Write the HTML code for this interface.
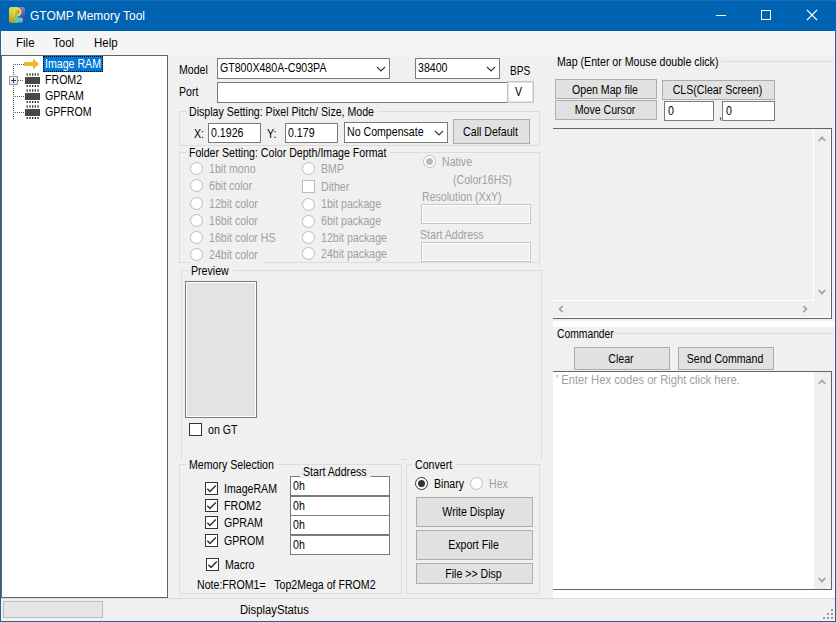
<!DOCTYPE html>
<html><head><meta charset="utf-8"><title>GTOMP Memory Tool</title>
<style>
html,body{margin:0;padding:0}
body{width:836px;height:622px;overflow:hidden;position:relative;background:#f0f0f0;font-family:"Liberation Sans",sans-serif;font-size:10.6px;color:#000}
.a{position:absolute;box-sizing:content-box}
.t{position:absolute;white-space:pre;line-height:1}
svg.a{display:block;overflow:visible}
</style></head><body>
<div class="a" style="left:0px;top:0px;width:836px;height:31px;background:#0063b1"></div>
<div class="a" style="left:0px;top:0px;width:836px;height:1px;background:#1a6fbd"></div>
<svg class="a" style="left:9px;top:7px" width="16" height="16" viewBox="0 0 16 16">
<defs>
<linearGradient id="il" x1="0" y1="0" x2="0" y2="1"><stop offset="0" stop-color="#b8e878"/><stop offset="0.5" stop-color="#e8c020"/><stop offset="1" stop-color="#a0a018"/></linearGradient>
<linearGradient id="ir" x1="0" y1="0" x2="0" y2="1"><stop offset="0" stop-color="#8080e8"/><stop offset="1" stop-color="#203890"/></linearGradient>
</defs>
<rect x="0" y="0" width="16" height="16" rx="2.5" fill="url(#ir)"/>
<path d="M2.5 0 H9 V16 H2.5 A2.5 2.5 0 0 1 0 13.5 V2.5 A2.5 2.5 0 0 1 2.5 0 Z" fill="url(#il)"/>
<rect x="5" y="1" width="7" height="8" rx="2" fill="#d8a010" opacity="0.6"/>
<circle cx="8.3" cy="5" r="3.2" fill="none" stroke="#f8e030" stroke-width="1.9"/>
<path d="M6.2 6 H8.4 V10 L13.8 11 V15.6 H6.8 L4.8 12 L6.2 11.5 Z" fill="#58c8b8"/>
</svg>
<span class="t" style="left:29.5px;top:9.00px;font-size:13px;color:#fff;transform:scaleX(0.9200);transform-origin:0 0;">GTOMP Memory Tool</span>
<div class="a" style="left:716px;top:15px;width:10px;height:1px;background:#fff"></div>
<div class="a" style="left:761px;top:10px;width:8px;height:8px;border:1px solid #fff;background:transparent;"></div>
<svg class="a" style="left:806px;top:9px" width="12" height="12"><path d="M1 1 L11 11 M11 1 L1 11" stroke="#fff" stroke-width="1.1"/></svg>
<div class="a" style="left:0px;top:31px;width:1px;height:591px;background:#2b5f8f"></div>
<div class="a" style="left:835px;top:31px;width:1px;height:591px;background:#2b5f8f"></div>
<div class="a" style="left:0px;top:621px;width:836px;height:1px;background:#2b5f8f"></div>
<div class="a" style="left:1px;top:31px;width:834px;height:24px;background:#f5f5f5"></div>
<span class="t" style="left:15.5px;top:37.42px;font-size:12.5px;color:#000;transform:scaleX(0.9200);transform-origin:0 0;">File</span>
<span class="t" style="left:53px;top:37.42px;font-size:12.5px;color:#000;transform:scaleX(0.9200);transform-origin:0 0;">Tool</span>
<span class="t" style="left:93.5px;top:37.42px;font-size:12.5px;color:#000;transform:scaleX(0.9200);transform-origin:0 0;">Help</span>
<div class="a" style="left:1px;top:55px;width:165px;height:541px;border:1px solid #646464;background:#fff;"></div>
<div class="a" style="left:13px;top:64px;width:1px;height:55px;background:repeating-linear-gradient(to bottom,#5a5a5a 0 1px,transparent 1px 2px)"></div>
<div class="a" style="left:13px;top:64px;width:11px;height:1px;background:repeating-linear-gradient(to right,#5a5a5a 0 1px,transparent 1px 2px)"></div>
<div class="a" style="left:18px;top:80px;width:6px;height:1px;background:repeating-linear-gradient(to right,#5a5a5a 0 1px,transparent 1px 2px)"></div>
<div class="a" style="left:13px;top:96px;width:11px;height:1px;background:repeating-linear-gradient(to right,#5a5a5a 0 1px,transparent 1px 2px)"></div>
<div class="a" style="left:13px;top:112px;width:11px;height:1px;background:repeating-linear-gradient(to right,#5a5a5a 0 1px,transparent 1px 2px)"></div>
<svg class="a" style="left:9px;top:76px" width="9" height="9"><defs><linearGradient id="pg" x1="0" y1="0" x2="1" y2="1"><stop offset="0" stop-color="#fff"/><stop offset="1" stop-color="#d8dce8"/></linearGradient></defs><rect x="0.5" y="0.5" width="8" height="8" fill="url(#pg)" stroke="#9b9b9b"/><path d="M2 4.5 H7 M4.5 2 V7" stroke="#1e3a6e" stroke-width="1"/></svg>
<svg class="a" style="left:24px;top:57px" width="16" height="14"><path d="M0 5 H9 V1.5 L15 7 L9 12.5 V9 H0 Z" fill="#f4b42c"/></svg>
<svg class="a" style="left:25px;top:73px" width="15" height="14"><rect x="0" y="4" width="15" height="7" fill="#474747"/><rect x="1.6" y="0.3" width="1.3" height="2.4" fill="#2e3a2e"/><rect x="1.6" y="12" width="1.3" height="2" fill="#2e2e2e"/><rect x="4.4" y="0.3" width="1.3" height="2.4" fill="#2e3a2e"/><rect x="4.4" y="12" width="1.3" height="2" fill="#2e2e2e"/><rect x="7.0" y="0.3" width="1.3" height="2.4" fill="#2e3a2e"/><rect x="7.0" y="12" width="1.3" height="2" fill="#2e2e2e"/><rect x="9.7" y="0.3" width="1.3" height="2.4" fill="#2e3a2e"/><rect x="9.7" y="12" width="1.3" height="2" fill="#2e2e2e"/><rect x="12.5" y="0.3" width="1.3" height="2.4" fill="#2e3a2e"/><rect x="12.5" y="12" width="1.3" height="2" fill="#2e2e2e"/></svg>
<svg class="a" style="left:25px;top:89px" width="15" height="14"><rect x="0" y="4" width="15" height="7" fill="#474747"/><rect x="1.6" y="0.3" width="1.3" height="2.4" fill="#2e3a2e"/><rect x="1.6" y="12" width="1.3" height="2" fill="#2e2e2e"/><rect x="4.4" y="0.3" width="1.3" height="2.4" fill="#2e3a2e"/><rect x="4.4" y="12" width="1.3" height="2" fill="#2e2e2e"/><rect x="7.0" y="0.3" width="1.3" height="2.4" fill="#2e3a2e"/><rect x="7.0" y="12" width="1.3" height="2" fill="#2e2e2e"/><rect x="9.7" y="0.3" width="1.3" height="2.4" fill="#2e3a2e"/><rect x="9.7" y="12" width="1.3" height="2" fill="#2e2e2e"/><rect x="12.5" y="0.3" width="1.3" height="2.4" fill="#2e3a2e"/><rect x="12.5" y="12" width="1.3" height="2" fill="#2e2e2e"/></svg>
<svg class="a" style="left:25px;top:105px" width="15" height="14"><rect x="0" y="4" width="15" height="7" fill="#474747"/><rect x="1.6" y="0.3" width="1.3" height="2.4" fill="#2e3a2e"/><rect x="1.6" y="12" width="1.3" height="2" fill="#2e2e2e"/><rect x="4.4" y="0.3" width="1.3" height="2.4" fill="#2e3a2e"/><rect x="4.4" y="12" width="1.3" height="2" fill="#2e2e2e"/><rect x="7.0" y="0.3" width="1.3" height="2.4" fill="#2e3a2e"/><rect x="7.0" y="12" width="1.3" height="2" fill="#2e2e2e"/><rect x="9.7" y="0.3" width="1.3" height="2.4" fill="#2e3a2e"/><rect x="9.7" y="12" width="1.3" height="2" fill="#2e2e2e"/><rect x="12.5" y="0.3" width="1.3" height="2.4" fill="#2e3a2e"/><rect x="12.5" y="12" width="1.3" height="2" fill="#2e2e2e"/></svg>
<div class="a" style="left:43px;top:56px;width:60px;height:16px;background:#0078d7;outline:1px dotted #000;outline-offset:-1px"></div>
<span class="t" style="left:45px;top:57.84px;font-size:12px;color:#fff;transform:scaleX(0.8833);transform-origin:0 0;">Image RAM</span>
<span class="t" style="left:44.5px;top:73.84px;font-size:12px;color:#000;transform:scaleX(0.8833);transform-origin:0 0;">FROM2</span>
<span class="t" style="left:44.5px;top:89.84px;font-size:12px;color:#000;transform:scaleX(0.8833);transform-origin:0 0;">GPRAM</span>
<span class="t" style="left:44.5px;top:105.84px;font-size:12px;color:#000;transform:scaleX(0.8833);transform-origin:0 0;">GPFROM</span>
<span class="t" style="left:179px;top:63.84px;font-size:12px;color:#000;transform:scaleX(0.8833);transform-origin:0 0;">Model</span>
<div class="a" style="left:217px;top:58px;width:171px;height:19px;border:1px solid #7a7a7a;background:#fff;"></div>
<span class="t" style="left:220px;top:61.84px;font-size:12px;color:#000;transform:scaleX(0.8833);transform-origin:0 0;">GT800X480A-C903PA</span>
<svg class="a" style="left:376.0px;top:66.0px" width="10" height="6"><polyline points="1,1 5.0,5 9,1" fill="none" stroke="#333" stroke-width="1.1"/></svg>
<div class="a" style="left:415px;top:58px;width:83px;height:19px;border:1px solid #7a7a7a;background:#fff;"></div>
<span class="t" style="left:418px;top:61.84px;font-size:12px;color:#000;transform:scaleX(0.8833);transform-origin:0 0;">38400</span>
<svg class="a" style="left:486.0px;top:66.0px" width="10" height="6"><polyline points="1,1 5.0,5 9,1" fill="none" stroke="#333" stroke-width="1.1"/></svg>
<span class="t" style="left:510px;top:64.84px;font-size:12px;color:#000;transform:scaleX(0.8400);transform-origin:0 0;">BPS</span>
<span class="t" style="left:179px;top:85.84px;font-size:12px;color:#000;transform:scaleX(0.8833);transform-origin:0 0;">Port</span>
<div class="a" style="left:217px;top:82px;width:289px;height:19px;border:1px solid #7a7a7a;background:#fff;"></div>
<div class="a" style="left:507px;top:81px;width:23px;height:18px;border:2px solid;border-color:#c4c4c4;background:#fff;box-shadow:inset 0 0 0 0 #fff"></div>
<div class="a" style="left:508px;top:82px;width:25px;height:1px;background:#e3e3e3"></div>
<div class="a" style="left:508px;top:101px;width:25px;height:1px;background:#e3e3e3"></div>
<div class="a" style="left:508px;top:82px;width:1px;height:20px;background:#e3e3e3"></div>
<div class="a" style="left:532px;top:82px;width:1px;height:20px;background:#e3e3e3"></div>
<span class="t" style="left:505px;width:30.57px;text-align:center;top:85.84px;font-size:12px;color:#000;transform:scaleX(0.8833);transform-origin:0 0;">V</span>
<div class="a" style="left:179px;top:111px;width:359px;height:33px;border:1px solid #dcdcdc;background:transparent;"></div>
<span class="t" style="left:186px;top:105.84px;font-size:12px;color:#000;transform:scaleX(0.8833);transform-origin:0 0;background:#f0f0f0;padding:0 4.5px 0 3.4px;">Display Setting: Pixel Pitch/ Size, Mode</span>
<span class="t" style="left:194px;top:127.84px;font-size:12px;color:#000;transform:scaleX(0.8833);transform-origin:0 0;">X:</span>
<div class="a" style="left:208px;top:123px;width:51px;height:18px;border:1px solid #7a7a7a;background:#fff;"></div>
<span class="t" style="left:211px;top:126.84px;font-size:12px;color:#000;transform:scaleX(0.8833);transform-origin:0 0;">0.1926</span>
<span class="t" style="left:266.5px;top:127.84px;font-size:12px;color:#000;transform:scaleX(0.8833);transform-origin:0 0;">Y:</span>
<div class="a" style="left:285px;top:123px;width:51px;height:18px;border:1px solid #7a7a7a;background:#fff;"></div>
<span class="t" style="left:288px;top:126.84px;font-size:12px;color:#000;transform:scaleX(0.8833);transform-origin:0 0;">0.179</span>
<div class="a" style="left:344px;top:122px;width:102px;height:19px;border:1px solid #7a7a7a;background:#fff;"></div>
<span class="t" style="left:347px;top:125.84px;font-size:12px;color:#000;transform:scaleX(0.8833);transform-origin:0 0;">No Compensate</span>
<svg class="a" style="left:434.0px;top:130.0px" width="10" height="6"><polyline points="1,1 5.0,5 9,1" fill="none" stroke="#333" stroke-width="1.1"/></svg>
<div class="a" style="left:453px;top:119px;width:75px;height:23px;border:1px solid #adadad;background:#e1e1e1;"></div>
<span class="t" style="left:452px;width:87.17px;text-align:center;top:125.84px;font-size:12px;color:#000;transform:scaleX(0.8833);transform-origin:0 0;">Call Default</span>
<div class="a" style="left:179px;top:152px;width:359px;height:109px;border:1px solid #dcdcdc;background:transparent;"></div>
<span class="t" style="left:186px;top:146.84px;font-size:12px;color:#000;transform:scaleX(0.8833);transform-origin:0 0;background:#f0f0f0;padding:0 4.5px 0 3.4px;">Folder Setting: Color Depth/Image Format</span>
<div class="a" style="left:191px;top:262px;width:73px;height:1px;background:#f0f0f0"></div>
<svg class="a" style="left:190.0px;top:161.5px" width="13" height="13"><circle cx="6.5" cy="6.5" r="6" fill="#fff" stroke="#bcbcbc" stroke-width="1"/></svg>
<span class="t" style="left:208.8px;top:163.14px;font-size:12px;color:#a0a0a0;transform:scaleX(0.8833);transform-origin:0 0;">1bit mono</span>
<svg class="a" style="left:190.0px;top:178.5px" width="13" height="13"><circle cx="6.5" cy="6.5" r="6" fill="#fff" stroke="#bcbcbc" stroke-width="1"/></svg>
<span class="t" style="left:208.8px;top:180.14px;font-size:12px;color:#a0a0a0;transform:scaleX(0.8833);transform-origin:0 0;">6bit color</span>
<svg class="a" style="left:190.0px;top:196.5px" width="13" height="13"><circle cx="6.5" cy="6.5" r="6" fill="#fff" stroke="#bcbcbc" stroke-width="1"/></svg>
<span class="t" style="left:208.8px;top:198.14px;font-size:12px;color:#a0a0a0;transform:scaleX(0.8833);transform-origin:0 0;">12bit color</span>
<svg class="a" style="left:190.0px;top:213.5px" width="13" height="13"><circle cx="6.5" cy="6.5" r="6" fill="#fff" stroke="#bcbcbc" stroke-width="1"/></svg>
<span class="t" style="left:208.8px;top:215.14px;font-size:12px;color:#a0a0a0;transform:scaleX(0.8833);transform-origin:0 0;">16bit color</span>
<svg class="a" style="left:190.0px;top:230.5px" width="13" height="13"><circle cx="6.5" cy="6.5" r="6" fill="#fff" stroke="#bcbcbc" stroke-width="1"/></svg>
<span class="t" style="left:208.8px;top:232.14px;font-size:12px;color:#a0a0a0;transform:scaleX(0.8833);transform-origin:0 0;">16bit color HS</span>
<svg class="a" style="left:190.0px;top:247.5px" width="13" height="13"><circle cx="6.5" cy="6.5" r="6" fill="#fff" stroke="#bcbcbc" stroke-width="1"/></svg>
<span class="t" style="left:208.8px;top:249.14px;font-size:12px;color:#a0a0a0;transform:scaleX(0.8833);transform-origin:0 0;">24bit color</span>
<svg class="a" style="left:302.0px;top:162.0px" width="13" height="13"><circle cx="6.5" cy="6.5" r="6" fill="#fff" stroke="#bcbcbc" stroke-width="1"/></svg>
<span class="t" style="left:321px;top:162.64px;font-size:12px;color:#a0a0a0;transform:scaleX(0.8833);transform-origin:0 0;">BMP</span>
<svg class="a" style="left:302px;top:180px" width="13" height="13"><rect x="0.5" y="0.5" width="12" height="12" fill="#fff" stroke="#bcbcbc"/></svg>
<span class="t" style="left:321px;top:180.84px;font-size:12px;color:#a0a0a0;transform:scaleX(0.8833);transform-origin:0 0;">Dither</span>
<svg class="a" style="left:302.0px;top:197.5px" width="13" height="13"><circle cx="6.5" cy="6.5" r="6" fill="#fff" stroke="#bcbcbc" stroke-width="1"/></svg>
<span class="t" style="left:321px;top:198.14px;font-size:12px;color:#a0a0a0;transform:scaleX(0.8833);transform-origin:0 0;">1bit package</span>
<svg class="a" style="left:302.0px;top:214.5px" width="13" height="13"><circle cx="6.5" cy="6.5" r="6" fill="#fff" stroke="#bcbcbc" stroke-width="1"/></svg>
<span class="t" style="left:321px;top:215.14px;font-size:12px;color:#a0a0a0;transform:scaleX(0.8833);transform-origin:0 0;">6bit package</span>
<svg class="a" style="left:302.0px;top:231.0px" width="13" height="13"><circle cx="6.5" cy="6.5" r="6" fill="#fff" stroke="#bcbcbc" stroke-width="1"/></svg>
<span class="t" style="left:321px;top:231.64px;font-size:12px;color:#a0a0a0;transform:scaleX(0.8833);transform-origin:0 0;">12bit package</span>
<svg class="a" style="left:302.0px;top:247.0px" width="13" height="13"><circle cx="6.5" cy="6.5" r="6" fill="#fff" stroke="#bcbcbc" stroke-width="1"/></svg>
<span class="t" style="left:321px;top:247.64px;font-size:12px;color:#a0a0a0;transform:scaleX(0.8833);transform-origin:0 0;">24bit package</span>
<svg class="a" style="left:422.7px;top:154.8px" width="13" height="13"><circle cx="6.5" cy="6.5" r="6" fill="#fff" stroke="#bcbcbc" stroke-width="1"/><circle cx="6.5" cy="6.5" r="3.5" fill="#bcbcbc"/></svg>
<span class="t" style="left:441.5px;top:155.84px;font-size:12px;color:#a0a0a0;transform:scaleX(0.8833);transform-origin:0 0;">Native</span>
<span class="t" style="left:453px;top:173.84px;font-size:12px;color:#a0a0a0;transform:scaleX(0.8833);transform-origin:0 0;">(Color16HS)</span>
<span class="t" style="left:421.5px;top:191.34px;font-size:12px;color:#a0a0a0;transform:scaleX(0.8833);transform-origin:0 0;">Resolution (XxY)</span>
<div class="a" style="left:421px;top:204px;width:108px;height:18px;border:1px solid #c8c8c8;background:#f0f0f0;box-shadow:inset 0 0 0 1px #fff"></div>
<span class="t" style="left:419.5px;top:228.84px;font-size:12px;color:#a0a0a0;transform:scaleX(0.8833);transform-origin:0 0;">Start Address</span>
<div class="a" style="left:421px;top:242px;width:108px;height:18px;border:1px solid #c8c8c8;background:#f0f0f0;box-shadow:inset 0 0 0 1px #fff"></div>
<div class="a" style="left:181px;top:270px;width:359px;height:188px;border:1px solid #dcdcdc;background:transparent;"></div>
<span class="t" style="left:188px;top:264.84px;font-size:12px;color:#000;transform:scaleX(0.8833);transform-origin:0 0;background:#f0f0f0;padding:0 4.5px 0 3.4px;">Preview</span>
<div class="a" style="left:185px;top:281px;width:70px;height:135px;border:1px solid #7a7a7a;background:#e3e3e3;box-shadow:inset 0 0 0 1px #fff"></div>
<svg class="a" style="left:189px;top:423px" width="13" height="13"><rect x="0.5" y="0.5" width="12" height="12" fill="#fff" stroke="#333"/></svg>
<span class="t" style="left:207.5px;top:423.84px;font-size:12px;color:#000;transform:scaleX(0.8833);transform-origin:0 0;">on GT</span>
<div class="a" style="left:179px;top:460px;width:361px;height:5px;background:#f0f0f0"></div>
<div class="a" style="left:181px;top:459px;width:220px;height:1px;background:#f0f0f0"></div>
<div class="a" style="left:407px;top:459px;width:135px;height:1px;background:#f0f0f0"></div>
<div class="a" style="left:179px;top:464px;width:221px;height:128px;border:1px solid #dcdcdc;background:transparent;"></div>
<span class="t" style="left:186px;top:458.84px;font-size:12px;color:#000;transform:scaleX(0.8833);transform-origin:0 0;background:#f0f0f0;padding:0 4.5px 0 3.4px;">Memory Selection</span>
<svg class="a" style="left:205px;top:482px" width="13" height="13"><rect x="0.5" y="0.5" width="12" height="12" fill="#fff" stroke="#333"/><polyline points="2.3,6.8 5,9.4 10.8,3.4" fill="none" stroke="#333" stroke-width="1.5"/></svg>
<span class="t" style="left:224px;top:482.84px;font-size:12px;color:#000;transform:scaleX(0.8833);transform-origin:0 0;">ImageRAM</span>
<svg class="a" style="left:205px;top:499px" width="13" height="13"><rect x="0.5" y="0.5" width="12" height="12" fill="#fff" stroke="#333"/><polyline points="2.3,6.8 5,9.4 10.8,3.4" fill="none" stroke="#333" stroke-width="1.5"/></svg>
<span class="t" style="left:224px;top:499.84px;font-size:12px;color:#000;transform:scaleX(0.8833);transform-origin:0 0;">FROM2</span>
<svg class="a" style="left:205px;top:516px" width="13" height="13"><rect x="0.5" y="0.5" width="12" height="12" fill="#fff" stroke="#333"/><polyline points="2.3,6.8 5,9.4 10.8,3.4" fill="none" stroke="#333" stroke-width="1.5"/></svg>
<span class="t" style="left:224px;top:516.84px;font-size:12px;color:#000;transform:scaleX(0.8833);transform-origin:0 0;">GPRAM</span>
<svg class="a" style="left:205px;top:534px" width="13" height="13"><rect x="0.5" y="0.5" width="12" height="12" fill="#fff" stroke="#333"/><polyline points="2.3,6.8 5,9.4 10.8,3.4" fill="none" stroke="#333" stroke-width="1.5"/></svg>
<span class="t" style="left:224px;top:534.84px;font-size:12px;color:#000;transform:scaleX(0.8833);transform-origin:0 0;">GPROM</span>
<svg class="a" style="left:206px;top:558px" width="13" height="13"><rect x="0.5" y="0.5" width="12" height="12" fill="#fff" stroke="#333"/><polyline points="2.3,6.8 5,9.4 10.8,3.4" fill="none" stroke="#333" stroke-width="1.5"/></svg>
<span class="t" style="left:224.7px;top:558.84px;font-size:12px;color:#000;transform:scaleX(0.8833);transform-origin:0 0;">Macro</span>
<div class="a" style="left:290px;top:476px;width:98px;height:18px;border:1px solid #7a7a7a;background:#fff;"></div>
<span class="t" style="left:293px;top:479.84px;font-size:12px;color:#000;transform:scaleX(0.8833);transform-origin:0 0;">0h</span>
<div class="a" style="left:290px;top:496px;width:98px;height:18px;border:1px solid #7a7a7a;background:#fff;"></div>
<span class="t" style="left:293px;top:499.84px;font-size:12px;color:#000;transform:scaleX(0.8833);transform-origin:0 0;">0h</span>
<div class="a" style="left:290px;top:515px;width:98px;height:18px;border:1px solid #7a7a7a;background:#fff;"></div>
<span class="t" style="left:293px;top:518.84px;font-size:12px;color:#000;transform:scaleX(0.8833);transform-origin:0 0;">0h</span>
<div class="a" style="left:290px;top:535px;width:98px;height:18px;border:1px solid #7a7a7a;background:#fff;"></div>
<span class="t" style="left:293px;top:538.84px;font-size:12px;color:#000;transform:scaleX(0.8833);transform-origin:0 0;">0h</span>
<span class="t" style="left:300px;top:465.84px;font-size:12px;color:#000;transform:scaleX(0.8833);transform-origin:0 0;background:#f0f0f0;padding:0 4.5px 0 3.4px;">Start Address</span>
<span class="t" style="left:197px;top:578.84px;font-size:12px;color:#000;transform:scaleX(0.8833);transform-origin:0 0;">Note:FROM1=   Top2Mega of FROM2</span>
<div class="a" style="left:406px;top:464px;width:132px;height:128px;border:1px solid #dcdcdc;background:transparent;"></div>
<span class="t" style="left:412px;top:458.84px;font-size:12px;color:#000;transform:scaleX(0.8833);transform-origin:0 0;background:#f0f0f0;padding:0 4.5px 0 3.4px;">Convert</span>
<svg class="a" style="left:415.0px;top:477.0px" width="13" height="13"><circle cx="6.5" cy="6.5" r="6" fill="#fff" stroke="#333" stroke-width="1"/><circle cx="6.5" cy="6.5" r="3.5" fill="#333"/></svg>
<span class="t" style="left:434px;top:477.84px;font-size:12px;color:#000;transform:scaleX(0.8833);transform-origin:0 0;">Binary</span>
<svg class="a" style="left:470.0px;top:477.0px" width="13" height="13"><circle cx="6.5" cy="6.5" r="6" fill="#fff" stroke="#bcbcbc" stroke-width="1"/></svg>
<span class="t" style="left:488.8px;top:477.84px;font-size:12px;color:#a0a0a0;transform:scaleX(0.8833);transform-origin:0 0;">Hex</span>
<div class="a" style="left:416px;top:497px;width:115px;height:28px;border:1px solid #adadad;background:#e1e1e1;"></div>
<span class="t" style="left:415px;width:132.45px;text-align:center;top:505.84px;font-size:12px;color:#000;transform:scaleX(0.8833);transform-origin:0 0;">Write Display</span>
<div class="a" style="left:416px;top:530px;width:115px;height:28px;border:1px solid #adadad;background:#e1e1e1;"></div>
<span class="t" style="left:415px;width:132.45px;text-align:center;top:538.84px;font-size:12px;color:#000;transform:scaleX(0.8833);transform-origin:0 0;">Export File</span>
<div class="a" style="left:416px;top:563px;width:115px;height:19px;border:1px solid #adadad;background:#e1e1e1;"></div>
<span class="t" style="left:415px;width:132.45px;text-align:center;top:567.84px;font-size:12px;color:#000;transform:scaleX(0.8833);transform-origin:0 0;">File &gt;&gt; Disp</span>
<span class="t" style="left:557px;top:55.84px;font-size:12px;color:#000;transform:scaleX(0.8833);transform-origin:0 0;">Map (Enter or Mouse double click)</span>
<div class="a" style="left:721px;top:61px;width:114px;height:1px;background:#dcdcdc"></div>
<div class="a" style="left:555px;top:79px;width:100px;height:18px;border:1px solid #adadad;background:#e1e1e1;"></div>
<span class="t" style="left:554px;width:115.47px;text-align:center;top:84.34px;font-size:12px;color:#000;transform:scaleX(0.8833);transform-origin:0 0;">Open Map file</span>
<div class="a" style="left:662px;top:80px;width:111px;height:18px;border:1px solid #adadad;background:#e1e1e1;"></div>
<span class="t" style="left:661px;width:127.92px;text-align:center;top:83.84px;font-size:12px;color:#000;transform:scaleX(0.8833);transform-origin:0 0;">CLS(Clear Screen)</span>
<div class="a" style="left:555px;top:100px;width:100px;height:18px;border:1px solid #adadad;background:#e1e1e1;"></div>
<span class="t" style="left:554px;width:115.47px;text-align:center;top:103.84px;font-size:12px;color:#000;transform:scaleX(0.8833);transform-origin:0 0;">Move Cursor</span>
<div class="a" style="left:664px;top:101px;width:48px;height:18px;border:1px solid #7a7a7a;background:#fff;"></div>
<span class="t" style="left:667.5px;top:104.84px;font-size:12px;color:#000;transform:scaleX(0.8833);transform-origin:0 0;">0</span>
<span class="t" style="left:719px;top:108.84px;font-size:12px;color:#000;transform:scaleX(0.8833);transform-origin:0 0;">,</span>
<div class="a" style="left:722px;top:101px;width:51px;height:18px;border:1px solid #7a7a7a;background:#fff;"></div>
<span class="t" style="left:725.5px;top:104.84px;font-size:12px;color:#000;transform:scaleX(0.8833);transform-origin:0 0;">0</span>
<div class="a" style="left:553px;top:128px;width:279px;height:191px;background:#f0f0f0"></div>
<div class="a" style="left:553px;top:128px;width:279px;height:1px;background:#646464"></div>
<div class="a" style="left:831px;top:128px;width:1px;height:191px;background:#646464"></div>
<div class="a" style="left:553px;top:318px;width:279px;height:1px;background:#646464"></div>
<div class="a" style="left:553px;top:300px;width:261px;height:1px;background:#fff"></div>
<div class="a" style="left:813px;top:129px;width:1px;height:172px;background:#fff"></div>
<div class="a" style="left:830px;top:129px;width:1px;height:189px;background:#fff"></div>
<div class="a" style="left:553px;top:317px;width:278px;height:1px;background:#fff"></div>
<svg class="a" style="left:816.5px;top:134px" width="10" height="10"><polyline points="1.80,7.00 5.00,3.30 8.20,7.00" fill="none" stroke="#a6a6a6" stroke-width="1.8"/></svg>
<svg class="a" style="left:816.5px;top:287px" width="10" height="10"><polyline points="1.80,3.00 5.00,6.70 8.20,3.00" fill="none" stroke="#a6a6a6" stroke-width="1.8"/></svg>
<svg class="a" style="left:556px;top:303.5px" width="10" height="10"><polyline points="6.70,1.80 3.50,5.00 6.70,8.20" fill="none" stroke="#a6a6a6" stroke-width="1.8"/></svg>
<svg class="a" style="left:800px;top:303.5px" width="10" height="10"><polyline points="3.30,1.80 6.50,5.00 3.30,8.20" fill="none" stroke="#a6a6a6" stroke-width="1.8"/></svg>
<div class="a" style="left:553px;top:321px;width:281px;height:6px;background:#fff"></div>
<span class="t" style="left:556.5px;top:327.84px;font-size:12px;color:#000;transform:scaleX(0.8600);transform-origin:0 0;">Commander</span>
<div class="a" style="left:615px;top:333px;width:220px;height:1px;background:#dcdcdc"></div>
<div class="a" style="left:574px;top:347px;width:94px;height:21px;border:1px solid #adadad;background:#e1e1e1;"></div>
<span class="t" style="left:573px;width:108.68px;text-align:center;top:352.84px;font-size:12px;color:#000;transform:scaleX(0.8833);transform-origin:0 0;">Clear</span>
<div class="a" style="left:678px;top:347px;width:94px;height:21px;border:1px solid #adadad;background:#e1e1e1;"></div>
<span class="t" style="left:677px;width:108.68px;text-align:center;top:352.84px;font-size:12px;color:#000;transform:scaleX(0.8833);transform-origin:0 0;">Send Command</span>
<div class="a" style="left:553px;top:371px;width:279px;height:219px;background:#fff"></div>
<div class="a" style="left:553px;top:371px;width:279px;height:1px;background:#646464"></div>
<div class="a" style="left:831px;top:371px;width:1px;height:219px;background:#646464"></div>
<div class="a" style="left:553px;top:589px;width:279px;height:1px;background:#646464"></div>
<div class="a" style="left:814px;top:372px;width:17px;height:217px;background:#f0f0f0"></div>
<svg class="a" style="left:816.5px;top:377px" width="10" height="10"><polyline points="1.80,7.00 5.00,3.30 8.20,7.00" fill="none" stroke="#a6a6a6" stroke-width="1.8"/></svg>
<svg class="a" style="left:816.5px;top:575px" width="10" height="10"><polyline points="1.80,3.00 5.00,6.70 8.20,3.00" fill="none" stroke="#a6a6a6" stroke-width="1.8"/></svg>
<span class="t" style="left:556px;top:373.84px;font-size:12px;color:#a0a0a0;transform:scaleX(0.9330);transform-origin:0 0;">' Enter Hex codes or Right click here.</span>
<div class="a" style="left:553px;top:590px;width:282px;height:8px;background:#fff"></div>
<div class="a" style="left:834px;top:31px;width:1px;height:590px;background:#f7fbff"></div>
<div class="a" style="left:1px;top:598px;width:834px;height:1px;background:#dadada"></div>
<div class="a" style="left:1px;top:599px;width:834px;height:22px;background:#f0f0f0"></div>
<div class="a" style="left:3px;top:601px;width:98px;height:15px;border:1px solid #bcbcbc;background:#e6e6e6;"></div>
<span class="t" style="left:239.5px;top:604.42px;font-size:12.5px;color:#000;transform:scaleX(0.9000);transform-origin:0 0;">DisplayStatus</span>
<svg class="a" style="left:822px;top:606px" width="12" height="14"><rect x="9" y="3" width="2" height="2" fill="#9a9a9a"/><rect x="5" y="7" width="2" height="2" fill="#9a9a9a"/><rect x="9" y="7" width="2" height="2" fill="#9a9a9a"/><rect x="1" y="11" width="2" height="2" fill="#9a9a9a"/><rect x="5" y="11" width="2" height="2" fill="#9a9a9a"/><rect x="9" y="11" width="2" height="2" fill="#9a9a9a"/></svg>
</body></html>
